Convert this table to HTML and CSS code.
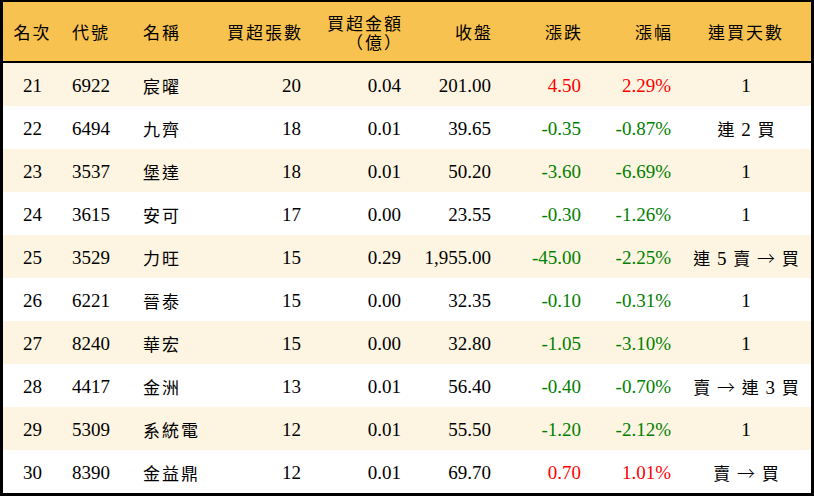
FILE: index.html
```html
<!DOCTYPE html>
<html lang="zh-Hant">
<head>
<meta charset="utf-8">
<title>買超排行</title>
<link rel="stylesheet" href="styles.css">
</head>
<body>
<div class="board">
  <div class="row head">
    <div class="cell center">名次</div>
    <div class="cell left">代號</div>
    <div class="cell left">名稱</div>
    <div class="cell right">買超張數</div>
    <div class="cell right two"><span>買超金額</span><span>（億）</span></div>
    <div class="cell right">收盤</div>
    <div class="cell right">漲跌</div>
    <div class="cell right">漲幅</div>
    <div class="cell center">連買天數</div>
  </div>

  <div class="row alt">
    <div class="cell center">21</div><div class="cell left">6922</div><div class="cell left name">宸曜</div>
    <div class="cell right">20</div><div class="cell right">0.04</div><div class="cell right">201.00</div>
    <div class="cell right up">4.50</div><div class="cell right up">2.29%</div>
    <div class="cell center">1</div>
  </div>
  <div class="row">
    <div class="cell center">22</div><div class="cell left">6494</div><div class="cell left name">九齊</div>
    <div class="cell right">18</div><div class="cell right">0.01</div><div class="cell right">39.65</div>
    <div class="cell right down">-0.35</div><div class="cell right down">-0.87%</div>
    <div class="cell center"><span class="c">連</span> 2 <span class="c">買</span></div>
  </div>
  <div class="row alt">
    <div class="cell center">23</div><div class="cell left">3537</div><div class="cell left name">堡達</div>
    <div class="cell right">18</div><div class="cell right">0.01</div><div class="cell right">50.20</div>
    <div class="cell right down">-3.60</div><div class="cell right down">-6.69%</div>
    <div class="cell center">1</div>
  </div>
  <div class="row">
    <div class="cell center">24</div><div class="cell left">3615</div><div class="cell left name">安可</div>
    <div class="cell right">17</div><div class="cell right">0.00</div><div class="cell right">23.55</div>
    <div class="cell right down">-0.30</div><div class="cell right down">-1.26%</div>
    <div class="cell center">1</div>
  </div>
  <div class="row alt">
    <div class="cell center">25</div><div class="cell left">3529</div><div class="cell left name">力旺</div>
    <div class="cell right">15</div><div class="cell right">0.29</div><div class="cell right">1,955.00</div>
    <div class="cell right down">-45.00</div><div class="cell right down">-2.25%</div>
    <div class="cell center"><span class="c">連</span> 5 <span class="c">賣</span> <span class="a">→</span> <span class="c">買</span></div>
  </div>
  <div class="row">
    <div class="cell center">26</div><div class="cell left">6221</div><div class="cell left name">晉泰</div>
    <div class="cell right">15</div><div class="cell right">0.00</div><div class="cell right">32.35</div>
    <div class="cell right down">-0.10</div><div class="cell right down">-0.31%</div>
    <div class="cell center">1</div>
  </div>
  <div class="row alt">
    <div class="cell center">27</div><div class="cell left">8240</div><div class="cell left name">華宏</div>
    <div class="cell right">15</div><div class="cell right">0.00</div><div class="cell right">32.80</div>
    <div class="cell right down">-1.05</div><div class="cell right down">-3.10%</div>
    <div class="cell center">1</div>
  </div>
  <div class="row">
    <div class="cell center">28</div><div class="cell left">4417</div><div class="cell left name">金洲</div>
    <div class="cell right">13</div><div class="cell right">0.01</div><div class="cell right">56.40</div>
    <div class="cell right down">-0.40</div><div class="cell right down">-0.70%</div>
    <div class="cell center"><span class="c">賣</span> <span class="a">→</span> <span class="c">連</span> 3 <span class="c">買</span></div>
  </div>
  <div class="row alt">
    <div class="cell center">29</div><div class="cell left">5309</div><div class="cell left name">系統電</div>
    <div class="cell right">12</div><div class="cell right">0.01</div><div class="cell right">55.50</div>
    <div class="cell right down">-1.20</div><div class="cell right down">-2.12%</div>
    <div class="cell center">1</div>
  </div>
  <div class="row">
    <div class="cell center">30</div><div class="cell left">8390</div><div class="cell left name">金益鼎</div>
    <div class="cell right">12</div><div class="cell right">0.01</div><div class="cell right">69.70</div>
    <div class="cell right up">0.70</div><div class="cell right up">1.01%</div>
    <div class="cell center"><span class="c">賣</span> <span class="a">→</span> <span class="c">買</span></div>
  </div>
</div>
</body>
</html>
```

FILE: styles.css
```css
html, body {
  margin: 0;
  padding: 0;
  background: #ffffff;
}

.board {
  box-sizing: border-box;
  width: 814px;
  height: 496px;
  border: 3px solid #000;
  border-top-width: 2px;
  font-family: "Liberation Serif", "Noto Sans CJK TC", serif;
  font-size: 19px;
  color: #000;
  background: #fff;
}

.row {
  display: grid;
  grid-template-columns: 59px 71px 87px 91px 100px 90px 90px 90px 130px;
  height: 43px;
  align-items: center;
}

.row.alt {
  background: #fdf5e1;
}

.row.head {
  height: 59px;
  background: #f8c250;
  border-bottom: 2px solid #000;
  font-family: "Noto Sans CJK TC", serif;
  font-size: 17px;
  letter-spacing: 2px;
}

.cell {
  line-height: 20px;
  padding-top: 3px;
  white-space: nowrap;
}

.head .cell {
  padding-top: 0;
}

.left {
  text-align: left;
  padding-left: 10px;
}

.right {
  text-align: right;
  padding-right: 10px;
}

.head .right {
  padding-right: 8px;
}

.center {
  text-align: center;
  word-spacing: 2px;
}

.two {
  display: flex;
  flex-direction: column;
  align-items: flex-end;
  line-height: 19px;
}

.name,
.c {
  font-family: "Noto Sans CJK TC", serif;
  font-size: 17px;
  letter-spacing: 2px;
}

.c {
  letter-spacing: 0;
}

.a {
  font-family: "Noto Sans CJK TC", sans-serif;
  font-size: 18px;
  font-weight: 300;
}

.up {
  color: #ff0000;
}

.down {
  color: #008000;
}
```
